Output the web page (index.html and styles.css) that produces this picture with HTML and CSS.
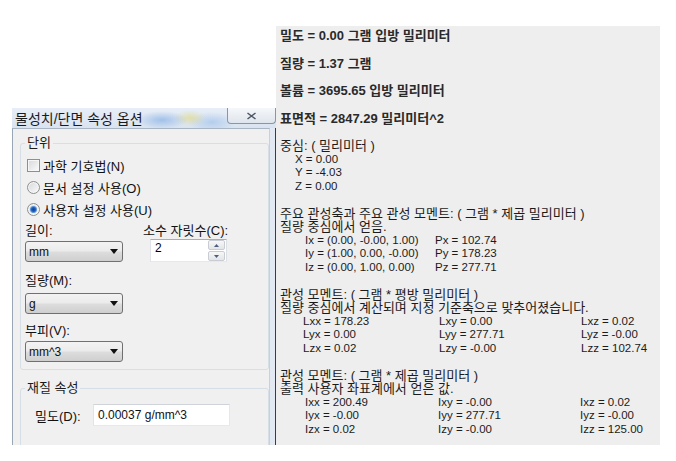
FILE: index.html
```html
<!DOCTYPE html>
<html lang="ko">
<head>
<meta charset="utf-8">
<title>물성치/단면 속성 옵션</title>
<link rel="stylesheet" href="styles.css">
</head>
<body>
<div class="screen">
  <div class="dialog">
    <div class="titlebar">
      <span class="title">물성치/단면 속성 옵션</span>
      <div class="close">
        <svg width="11" height="8" viewBox="0 0 11 8"><path d="M1.5 1 L9.5 7 M9.5 1 L1.5 7" stroke="#4a5462" stroke-width="1.5" fill="none"/></svg>
      </div>
    </div>
    <div class="frame">
      <div class="client">
        <fieldset class="group units">
          <legend>단위</legend>
          <label class="opt"><span class="check"></span>과학 기호법(N)</label>
          <label class="opt"><span class="radio"></span>문서 설정 사용(O)</label>
          <label class="opt"><span class="radio on"></span>사용자 설정 사용(U)</label>
          <div class="pair">
            <div class="col">
              <div class="lbl">길이:</div>
              <div class="combo first"><span>mm</span><svg width="8" height="5" viewBox="0 0 8 5"><path d="M0 0 H8 L4 5 Z" fill="#111"/></svg></div>
            </div>
            <div class="col col2">
              <div class="lbl">소수 자릿수(C):</div>
              <div class="spin">
                <span class="spin-val">2</span>
                <div class="spin-btns">
                  <div class="sbtn"><svg width="5" height="3" viewBox="0 0 5 3"><path d="M0 3 L2.5 0 L5 3 Z" fill="#4b5f80"/></svg></div>
                  <div class="sbtn"><svg width="5" height="3" viewBox="0 0 5 3"><path d="M0 0 L2.5 3 L5 0 Z" fill="#4b5f80"/></svg></div>
                </div>
              </div>
            </div>
          </div>
          <div class="lbl mass">질량(M):</div>
          <div class="combo mass-c"><span>g</span><svg width="8" height="5" viewBox="0 0 8 5"><path d="M0 0 H8 L4 5 Z" fill="#111"/></svg></div>
          <div class="lbl vol">부피(V):</div>
          <div class="combo vol-c"><span>mm^3</span><svg width="8" height="5" viewBox="0 0 8 5"><path d="M0 0 H8 L4 5 Z" fill="#111"/></svg></div>
        </fieldset>
        <fieldset class="group material">
          <legend>재질 속성</legend>
          <div class="density">
            <span class="dlbl">밀도(D):</span>
            <div class="textbox">0.00037 g/mm^3</div>
          </div>
        </fieldset>
      </div>
    </div>
  </div>

  <div class="panel">
    <p class="sum">밀도 = 0.00 그램 입방 밀리미터</p>
    <p class="sum">질량 = 1.37 그램</p>
    <p class="sum">볼륨 = 3695.65 입방 밀리미터</p>
    <p class="sum last">표면적 = 2847.29 밀리미터^2</p>
    <div class="report">
      <div class="h">중심: ( 밀리미터 )</div>
      <div class="n ind">X = 0.00</div>
      <div class="n ind">Y = -4.03</div>
      <div class="n ind">Z = 0.00</div>
      <div class="blank"></div>
      <div class="h">주요 관성축과 주요 관성 모멘트: ( 그램 * 제곱 밀리미터 )</div>
      <div class="h">질량 중심에서 얻음.</div>
      <div class="n row2"><span>Ix = (0.00, -0.00, 1.00)</span><span>Px = 102.74</span></div>
      <div class="n row2"><span>Iy = (1.00, 0.00, -0.00)</span><span>Py = 178.23</span></div>
      <div class="n row2"><span>Iz = (0.00, 1.00, 0.00)</span><span>Pz = 277.71</span></div>
      <div class="blank"></div>
      <div class="h">관성 모멘트: ( 그램 * 평방 밀리미터 )</div>
      <div class="h">질량 중심에서 계산되며 지정 기준축으로 맞추어졌습니다.</div>
      <div class="n row3"><span>Lxx = 178.23</span><span>Lxy = 0.00</span><span>Lxz = 0.02</span></div>
      <div class="n row3"><span>Lyx = 0.00</span><span>Lyy = 277.71</span><span>Lyz = -0.00</span></div>
      <div class="n row3"><span>Lzx = 0.02</span><span>Lzy = -0.00</span><span>Lzz = 102.74</span></div>
      <div class="blank"></div>
      <div class="h">관성 모멘트: ( 그램 * 제곱 밀리미터 )</div>
      <div class="h">출력 사용자 좌표계에서 얻은 값.</div>
      <div class="n row3 r3b"><span>Ixx = 200.49</span><span>Ixy = -0.00</span><span>Ixz = 0.02</span></div>
      <div class="n row3 r3b"><span>Iyx = -0.00</span><span>Iyy = 277.71</span><span>Iyz = -0.00</span></div>
      <div class="n row3 r3b"><span>Izx = 0.02</span><span>Izy = -0.00</span><span>Izz = 125.00</span></div>
    </div>
  </div>
</div>
</body>
</html>
```

FILE: styles.css
```css
* { box-sizing: border-box; }
html, body { margin: 0; padding: 0; background: #fff; }
body {
  width: 676px;
  height: 461px;
  overflow: hidden;
  font-family: "Liberation Sans", "Noto Sans CJK KR", sans-serif;
  color: #000;
}
.screen {
  display: flex;
  align-items: flex-end;
  height: 445px;
  overflow: hidden;
}

/* ---------- dialog ---------- */
.dialog {
  margin-left: 12px;
  width: 264px;
  height: 337px;
  display: flex;
  flex-direction: column;
  flex: none;
}
.titlebar {
  position: relative;
  height: 25px;
  padding: 2px 0 0 3px;
  background:
    radial-gradient(ellipse 26px 9px at 150px 12px, rgba(110,160,225,0.55), rgba(110,160,225,0)),
    radial-gradient(ellipse 16px 8px at 178px 10px, rgba(225,215,120,0.6), rgba(225,215,120,0)),
    radial-gradient(ellipse 24px 10px at 200px 14px, rgba(130,175,230,0.45), rgba(130,175,230,0)),
    linear-gradient(#e7eef7, #d9e4f1);
}
.title {
  font-size: 14px;
  line-height: 18px;
  color: #1a1a1a;
  white-space: nowrap;
}
.close {
  position: absolute;
  top: 0;
  right: 0;
  width: 49px;
  height: 16px;
  border: 1px solid #8a96a5;
  border-top: none;
  border-radius: 0 0 4px 4px;
  background: linear-gradient(#f5f7fa, #dfe5ec);
  display: flex;
  align-items: center;
  justify-content: center;
}
.frame {
  flex: 1;
  display: flex;
  background: #e2e9f2;
  border-right: 1px solid #3c3c3c;
}
.client {
  width: 258px;
  border-left: 1px solid #98a6b5;
  border-top: 1px solid #a9b5c2;
  border-right: 1px solid #c8d1db;
  background: #f0f0f0;
  padding: 7px 0 0 7px;
  overflow: hidden;
}
.group {
  margin: 0;
  width: 249px;
  min-inline-size: 0;
  border: 1px solid #d5dfe5;
  border-radius: 3px;
  padding: 7px 0 7px 4px;
}
.group legend {
  padding: 0 2px;
  margin: 0;
  font-size: 13px;
  line-height: 14px;
  color: #1a1a1a;
}
.opt {
  display: flex;
  align-items: center;
  height: 16px;
  margin-left: 2px;
  font-size: 13px;
  color: #111;
}
.opt + .opt { margin-top: 6px; }
.check, .radio {
  width: 13px;
  height: 13px;
  margin-right: 3px;
  border: 1px solid #8e8f8f;
  background: linear-gradient(135deg, #d6d8dc, #fbfbfb);
  box-shadow: inset 0 0 0 1px #f6f6f6;
  flex: none;
}
.radio { border-radius: 50%; }
.radio.on {
  background:
    radial-gradient(circle at 50% 50%, #0f3f8c 0, #1f5fbf 2px, #6f9fdc 3.2px, rgba(150,190,235,0) 4px),
    linear-gradient(135deg, #d6d8dc, #fbfbfb);
}
.pair {
  display: flex;
  margin-top: 6px;
}
.col { width: 98px; }
.col2 { width: auto; margin-left: 20px; }
.lbl {
  font-size: 13px;
  line-height: 16px;
  height: 16px;
  color: #111;
  white-space: nowrap;
}
.combo {
  width: 98px;
  height: 21px;
  border: 1px solid #707070;
  border-radius: 3px;
  background: linear-gradient(#f3f3f3 0%, #ebebeb 48%, #dddddd 52%, #cfcfcf 100%);
  display: flex;
  align-items: center;
  justify-content: space-between;
  padding: 0 4px 0 3px;
  font-size: 12px;
  color: #111;
}
.combo.first { margin-top: 2px; }
.spin {
  margin-left: 7px;
  width: 77px;
  height: 23px;
  border: 1px solid;
  border-color: #abadb3 #dbdfe6 #e3e9ef #e2e3ea;
  background: #fff;
  display: flex;
}
.spin-val {
  flex: 1;
  padding: 1px 0 0 4px;
  font-size: 12px;
  line-height: 14px;
}
.spin-btns {
  width: 18px;
  display: flex;
  flex-direction: column;
  gap: 1px;
  padding: 0 1px 0 0;
}
.sbtn {
  flex: 1;
  border: 1px solid #c9ccd2;
  border-radius: 2px;
  background: linear-gradient(#f7f7f7, #e3e5e8);
  display: flex;
  align-items: center;
  justify-content: center;
}
.lbl.mass { margin-top: 11px; }
.combo.mass-c { margin-top: 4px; }
.lbl.vol { margin-top: 9px; }
.combo.vol-c { margin-top: 2px; }

.material {
  margin-top: 11px;
  height: 100px;
  padding-top: 9px;
}
.density {
  display: flex;
  align-items: center;
  margin-left: 10px;
}
.dlbl {
  width: 58px;
  font-size: 13px;
  color: #111;
}
.textbox {
  width: 137px;
  height: 22px;
  border: 1px solid;
  border-color: #cfd4da #e3e9ef #e3e9ef #e2e3ea;
  background: #fff;
  padding-left: 4px;
  font-size: 12px;
  line-height: 20px;
  color: #111;
}

/* ---------- report panel ---------- */
.panel {
  width: 384px;
  height: 419px;
  flex: none;
  background: #eeeeee;
  padding: 3px 0 0 4px;
  color: #1b1b1b;
}
.sum {
  margin: 0 0 13.7px 0;
  font-size: 13px;
  line-height: 14px;
  font-weight: bold;
  color: #2a2a2a;
  white-space: nowrap;
}
.sum.last { margin-bottom: 13px; }
.report { line-height: 13.5px; }
.report .h {
  font-size: 13px;
  height: 13.5px;
  white-space: nowrap;
}
.report .n {
  font-size: 11.5px;
  height: 13.5px;
  white-space: nowrap;
}
.report .blank { height: 13.5px; }
.ind { padding-left: 15px; }
.row2 {
  display: grid;
  grid-template-columns: 130px auto;
  padding-left: 25px;
}
.row3 {
  display: grid;
  grid-template-columns: 136px 142px auto;
  padding-left: 23px;
}
.row3.r3b {
  grid-template-columns: 133px 142px auto;
  padding-left: 25px;
}
```
